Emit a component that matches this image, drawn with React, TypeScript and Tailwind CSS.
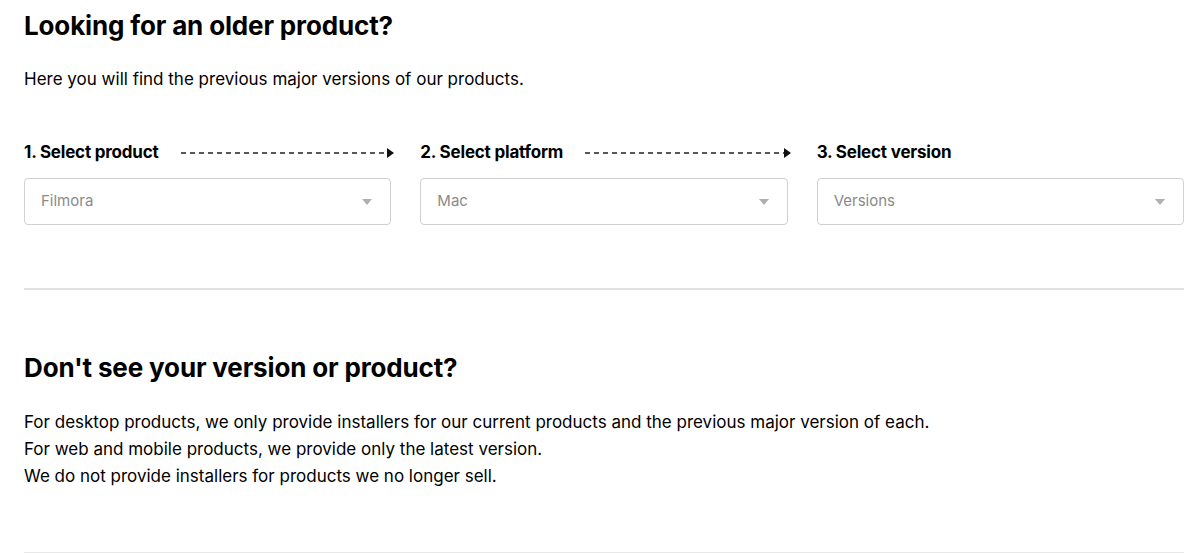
import React from 'react';

const STEPS = [
  { label: '1. Select product', value: 'Filmora', arrow: true },
  { label: '2. Select platform', value: 'Mac', arrow: true },
  { label: '3. Select version', value: 'Versions', arrow: false },
];

const NOTES = [
  'For desktop products, we only provide installers for our current products and the previous major version of each.',
  'For web and mobile products, we provide only the latest version.',
  'We do not provide installers for products we no longer sell.',
];

const Caret: React.FC = () => (
  <svg width="10" height="6" viewBox="0 0 10 6" className="shrink-0">
    <path d="M0 0 L10 0 L5 6 Z" fill="#b0b0b0" />
  </svg>
);

const App: React.FC = () => {
  return (
    <div className="w-[1200px] h-[553px] bg-white pl-6 pr-4 overflow-hidden text-black" style={{ fontFamily: 'Inter, "Liberation Sans", sans-serif' }}>
      <h2 className="pt-[8px] text-[26px] leading-[36px] font-bold tracking-[-0.15px]">Looking for an older product?</h2>
      <p className="mt-[24px] text-[17px] leading-[22px]">Here you will find the previous major versions of our products.</p>

      <div className="mt-[52px] grid grid-cols-3 gap-[29px]">
        {STEPS.map(step => (
          <div key={step.label} className="min-w-0">
            <div className="flex items-center h-[22px]">
              <span className="text-[17px] font-bold tracking-[-0.2px] whitespace-nowrap">{step.label}</span>
              {step.arrow && (
                <div className="flex-1 min-w-0 flex items-center ml-[22px] -mr-[3px]">
                  <div className="flex-1 min-w-0">
                    <svg className="block w-full" height="10">
                      <line x1="0" y1="5" x2="100%" y2="5" stroke="#222" strokeWidth="1.3" strokeDasharray="5 4" />
                    </svg>
                  </div>
                  <svg width="7" height="10" viewBox="0 0 7 10" className="shrink-0 -ml-[1px]">
                    <path d="M0 0 L7 5 L0 10 Z" fill="#111" />
                  </svg>
                </div>
              )}
            </div>
            <div className="mt-[14px] h-[47px] border border-[#d0d0d0] rounded-[4px] flex items-center justify-between pl-4 pr-[18px]">
              <span className="text-[15px] text-[#8a8a8a]">{step.value}</span>
              <Caret />
            </div>
          </div>
        ))}
      </div>

      <div className="mt-[63px] h-[2px] bg-[#e2e2e2]" />

      <h2 className="mt-[60px] text-[26px] leading-[36px] font-bold tracking-[-0.15px]">Don't see your version or product?</h2>
      <div className="mt-[23px] text-[17px] leading-[27px]">
        {NOTES.map(n => (
          <p key={n}>{n}</p>
        ))}
      </div>

      <div className="mt-[62px] h-[2px] bg-[#e8e8e8]" />
    </div>
  );
};

export default App;
